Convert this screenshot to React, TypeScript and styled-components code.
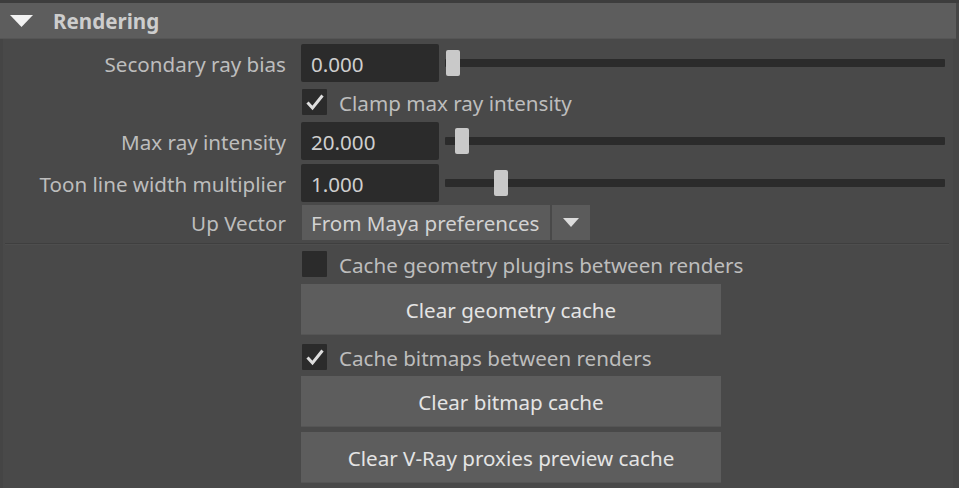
import React from "react";
import styled, { createGlobalStyle } from "styled-components";

const Global = createGlobalStyle`
  html, body { margin: 0; padding: 0; background: #484848; }
  body { font-family: "Noto Sans", "Open Sans", sans-serif; }
`;

const FS = "20.6px";

const Panel = styled.div`
  width: 959px;
  height: 488px;
  background: #494949;
  box-sizing: border-box;
  border-top: 3px solid #3d3d3d;
  overflow: hidden;
  display: flex;
  flex-direction: column;
  position: relative;
  box-shadow: inset 3px 0 0 #454545, inset -6px 0 0 #464646;
`;

const Header = styled.div`
  height: 36px;
  margin-right: 3px;
  background: #5d5d5d;
  border-bottom: 1px solid #555;
  box-sizing: border-box;
  display: flex;
  align-items: center;
  padding-left: 10px;
  gap: 20px;
  color: #cdcdcd;
  font-weight: 700;
  font-size: ${FS};
`;

const Body = styled.div`
  display: flex;
  flex-direction: column;
  padding-top: 5px;
`;

const Row = styled.div<{ $h: number; $mt?: number }>`
  display: flex;
  align-items: center;
  height: ${(p) => p.$h}px;
  margin-top: ${(p) => p.$mt ?? 0}px;
`;

const Label = styled.div`
  width: 286px;
  flex: none;
  text-align: right;
  color: #bdbdbd;
  font-size: ${FS};
  margin-right: 15px;
  white-space: nowrap;
  padding-top: 1px;
`;

const Spacer = styled.div`
  width: 301px;
  flex: none;
`;

const Field = styled.div`
  width: 138px;
  height: 38px;
  flex: none;
  background: #2b2b2b;
  border-radius: 2px;
  box-sizing: border-box;
  padding-left: 10px;
  padding-top: 1px;
  display: flex;
  align-items: center;
  color: #cfcfcf;
  font-size: ${FS};
`;

const Slider = styled.div`
  position: relative;
  margin-left: 6px;
  width: 500px;
  height: 8px;
  background: #2b2b2b;
  border-radius: 1px;
`;

const Handle = styled.div`
  position: absolute;
  top: -9px;
  width: 14px;
  height: 26px;
  background: #c9c9c9;
  border-radius: 2px;
`;

const Box = styled.div`
  width: 25px;
  height: 26px;
  flex: none;
  background: #2b2b2b;
  border-radius: 1px;
  margin-left: 1px;
  display: flex;
  align-items: center;
  justify-content: center;
`;

const CheckText = styled.div`
  margin-left: 12px;
  color: #bdbdbd;
  font-size: ${FS};
  white-space: nowrap;
  padding-top: 1px;
`;

const Dropdown = styled.div`
  margin-left: 1px;
  width: 248px;
  height: 35px;
  background: #5b5b5b;
  box-sizing: border-box;
  padding-left: 9px;
  padding-top: 1px;
  display: flex;
  align-items: center;
  color: #d2d2d2;
  font-size: ${FS};
  white-space: nowrap;
`;

const DropArrow = styled.div`
  margin-left: 2px;
  width: 38px;
  height: 35px;
  background: #5b5b5b;
  display: flex;
  align-items: center;
  justify-content: center;
`;

const Separator = styled.div`
  margin: 3px 10px 0 5px;
  height: 1px;
  background: #3f3f3f;
  box-shadow: 0 1px 0 #4e4e4e;
`;

const Button = styled.div`
  width: 420px;
  height: 51px;
  background: #5d5d5d;
  display: flex;
  align-items: center;
  justify-content: center;
  color: #e4e4e4;
  font-size: ${FS};
  padding-top: 1px;
  box-sizing: border-box;
  box-shadow: inset 0 -1px 0 #555;
`;

const Check = () => (
  <svg width="20" height="18" viewBox="0 0 20 18">
    <path d="M2.5 9.5 L7.5 15 L17.5 2.5" fill="none" stroke="#dedede" strokeWidth="3" strokeLinejoin="miter" />
  </svg>
);

const Tri = ({ w, h, c }: { w: number; h: number; c: string }) => (
  <svg width={w} height={h} viewBox={`0 0 ${w} ${h}`}>
    <polygon points={`0,0 ${w},0 ${w / 2},${h}`} fill={c} />
  </svg>
);

const SliderRow = ({ label, value, pos, mt }: { label: string; value: string; pos: number; mt: number }) => (
  <Row $h={38} $mt={mt}>
    <Label>{label}</Label>
    <Field>{value}</Field>
    <Slider>
      <Handle style={{ left: pos }} />
    </Slider>
  </Row>
);

const CheckRow = ({ label, checked, h, mt }: { label: string; checked: boolean; h: number; mt: number }) => (
  <Row $h={h} $mt={mt}>
    <Spacer />
    <Box>{checked && <Check />}</Box>
    <CheckText>{label}</CheckText>
  </Row>
);

const ButtonRow = ({ label, mt }: { label: string; mt: number }) => (
  <Row $h={51} $mt={mt}>
    <Spacer />
    <Button>{label}</Button>
  </Row>
);

export default function App() {
  return (
    <>
      <Global />
      <Panel>
        <Header>
          <Tri w={23} h={12} c="#f2f2f2" />
          <span>Rendering</span>
        </Header>
        <Body>
          <SliderRow label="Secondary ray bias" value="0.000" pos={1} mt={0} />
          <CheckRow label="Clamp max ray intensity" checked h={40} mt={0} />
          <SliderRow label="Max ray intensity" value="20.000" pos={10} mt={0} />
          <SliderRow label="Toon line width multiplier" value="1.000" pos={49} mt={4} />
          <Row $h={35} $mt={3}>
            <Label>Up Vector</Label>
            <Dropdown>From Maya preferences</Dropdown>
            <DropArrow>
              <Tri w={16} h={9} c="#dcdcdc" />
            </DropArrow>
          </Row>
          <Separator />
          <CheckRow label="Cache geometry plugins between renders" checked={false} h={26} mt={7} />
          <ButtonRow label="Clear geometry cache" mt={7} />
          <CheckRow label="Cache bitmaps between renders" checked h={26} mt={9} />
          <ButtonRow label="Clear bitmap cache" mt={6} />
          <ButtonRow label="Clear V-Ray proxies preview cache" mt={5} />
        </Body>
      </Panel>
    </>
  );
}
